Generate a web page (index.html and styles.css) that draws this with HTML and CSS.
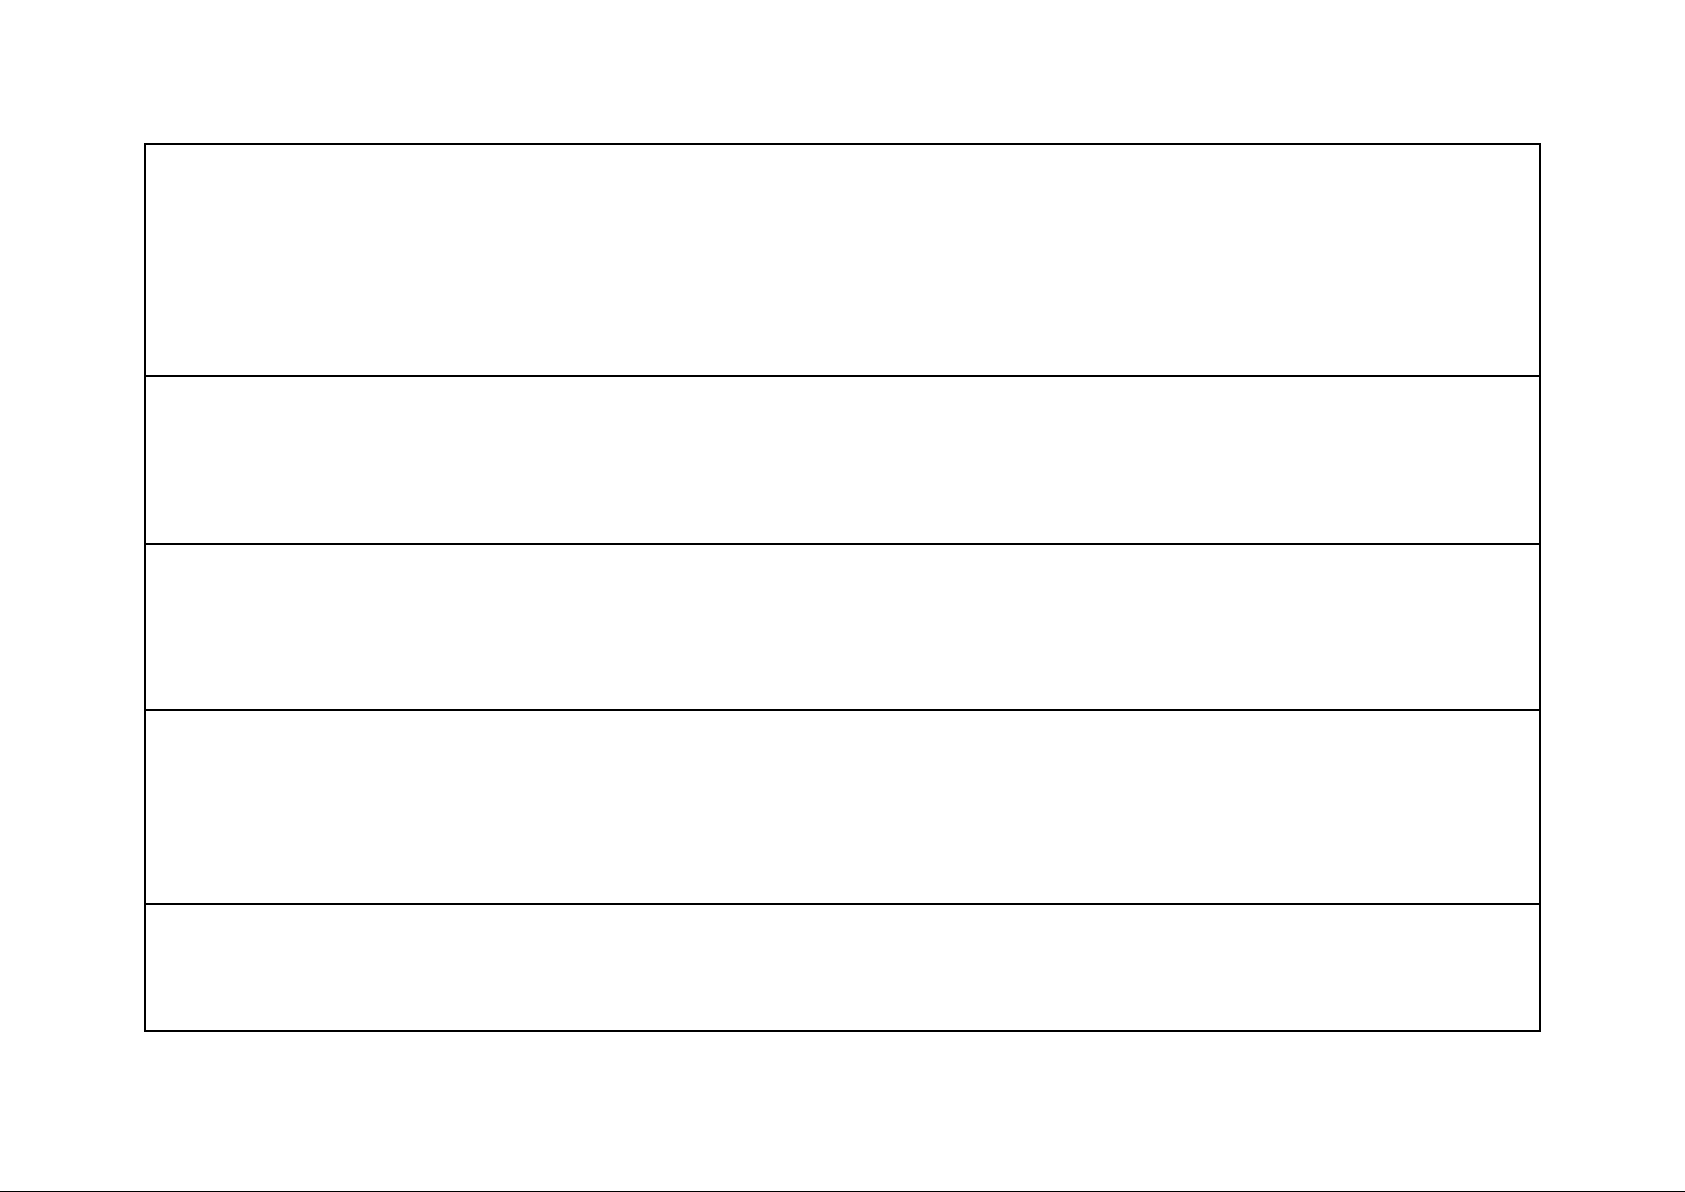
FILE: index.html
```html
<!DOCTYPE html>
<html lang="en">
<head>
<meta charset="utf-8">
<title>Table</title>
<link rel="stylesheet" href="styles.css">
</head>
<body>
<div class="page">
  <div class="grid">
    <div class="row row-1"></div>
    <div class="row row-2"></div>
    <div class="row row-3"></div>
    <div class="row row-4"></div>
    <div class="row row-5"></div>
  </div>
  <div class="edge"></div>
</div>
</body>
</html>
```
FILE: styles.css
```css
html, body {
  margin: 0;
  padding: 0;
  background: #ffffff;
  font-family: "Liberation Sans", Arial, sans-serif;
}
.page {
  display: flex;
  flex-direction: column;
  padding-top: 143px;
  height: 1192px;
  box-sizing: border-box;
  overflow: hidden;
}
.grid {
  margin-left: 144px;
  width: 1397px;
  box-sizing: border-box;
  border: 2px solid #000;
  display: flex;
  flex-direction: column;
}
.row { box-sizing: border-box; flex: none; }
.row + .row { border-top: 2px solid #000; }
.row-1 { height: 230px; }
.row-2 { height: 168px; }
.row-3 { height: 166px; }
.row-4 { height: 194px; }
.row-5 { height: 127px; }
.edge {
  margin-top: auto;
  height: 1px;
  background: #000;
}
```
